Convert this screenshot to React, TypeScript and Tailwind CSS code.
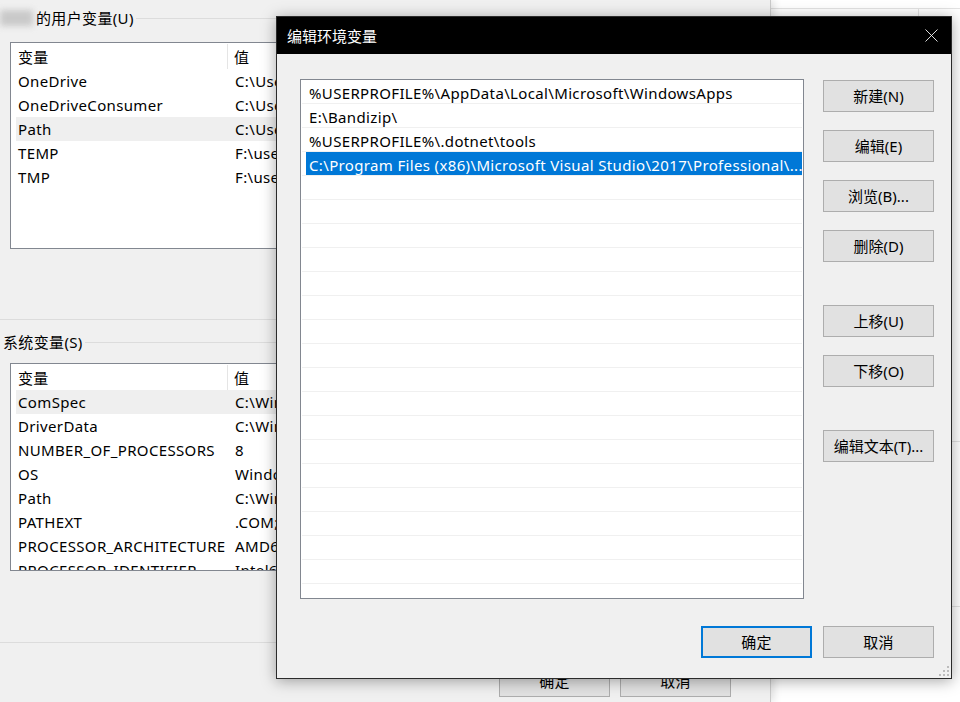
import { X } from 'lucide-react';

const font = { fontFamily: '"Noto Sans", "Noto Sans CJK SC", sans-serif' };

const userVars = [
  ['OneDrive', 'C:\\Users\\OneDrive'],
  ['OneDriveConsumer', 'C:\\Users\\OneDrive'],
  ['Path', 'C:\\Users\\AppData'],
  ['TEMP', 'F:\\users\\temp'],
  ['TMP', 'F:\\users\\temp'],
];

const sysVars = [
  ['ComSpec', 'C:\\Windows\\system32\\cmd.exe'],
  ['DriverData', 'C:\\Windows\\System32\\Drivers'],
  ['NUMBER_OF_PROCESSORS', '8'],
  ['OS', 'Windows_NT'],
  ['Path', 'C:\\Windows\\system32'],
  ['PATHEXT', '.COM;.EXE;.BAT'],
  ['PROCESSOR_ARCHITECTURE', 'AMD64'],
  ['PROCESSOR_IDENTIFIER', 'Intel64 Family 6'],
];

const paths = [
  '%USERPROFILE%\\AppData\\Local\\Microsoft\\WindowsApps',
  'E:\\Bandizip\\',
  '%USERPROFILE%\\.dotnet\\tools',
  'C:\\Program Files (x86)\\Microsoft Visual Studio\\2017\\Professional\\...',
];

function VarList({ rows, hot, height }: { rows: string[][]; hot: number; height: string }) {
  return (
    <div className={`ml-[10px] w-[740px] ${height} overflow-hidden border border-[#828790] bg-white`}>
      <div className="flex h-[26px] items-center">
        <div className="flex h-[25px] w-[217px] items-center border-r border-[#e5e5e5] pl-[7px] pt-px">变量</div>
        <div className="pl-[6px] pt-px">值</div>
      </div>
      {rows.map(([k, v], i) => (
        <div key={k + i} className={`ml-[5px] flex h-6 items-center ${i === hot ? 'bg-[#efefef]' : ''}`}>
          <div className="w-[212px] pl-[2px] whitespace-nowrap">{k}</div>
          <div className="pl-[7px] whitespace-nowrap">{v}</div>
        </div>
      ))}
    </div>
  );
}

function WinButton({ label, className = '' }: { label: string; className?: string }) {
  return (
    <button className={`flex h-8 w-[111px] items-center justify-center border border-[#adadad] bg-[#e1e1e1] ${className}`}>
      {label}
    </button>
  );
}

export default function App() {
  return (
    <div className="relative flex h-[702px] w-[960px] overflow-hidden bg-white text-[15px] leading-5 tracking-[0.35px] text-black" style={font}>
      {/* back window */}
      <div className="relative z-10 flex h-full w-[771px] flex-col border-r border-[#c9c9c9] bg-[#f0f0f0] shadow-[3px_0_8px_rgba(0,0,0,0.12)]">
        <div className="mt-2 flex h-5 items-center">
          <div className="h-[16px] w-[33px] bg-[#c9c9c9] blur-[3px]" />
          <span className="ml-[3px]">的用户变量(U)</span>
          <div className="ml-[2px] h-px flex-1 bg-[#dcdcdc]" />
        </div>
        <div className="mt-[14px]">
          <VarList rows={userVars} hot={2} height="h-[207px]" />
        </div>
        <div className="mt-[70px] h-px bg-[#dcdcdc]" />
        <div className="mt-[12px] flex h-5 items-center">
          <span className="pl-[3px]">系统变量(S)</span>
          <div className="ml-[2px] h-px flex-1 bg-[#dcdcdc]" />
        </div>
        <div className="mt-[11px]">
          <VarList rows={sysVars} hot={0} height="h-[208px]" />
        </div>
        <div className="mt-[71px] h-px bg-[#dcdcdc]" />
        <div className="ml-[499px] mt-[22px] flex gap-[10px]">
          <WinButton label="确定" className="w-[110px]" />
          <WinButton label="取消" />
        </div>
      </div>

      {/* window behind, right side */}
      <div className="flex flex-1 flex-col bg-white">
        <div className="h-[9px] border-b border-[#e3e3e3]" />
        <div className="flex h-[433px] border-b border-[#e3e3e3]">
          <div className="w-[148px] border-r border-[#e3e3e3]" />
        </div>
        <div className="h-[165px] border-b border-[#e3e3e3]" />
      </div>

      {/* edit dialog */}
      <div className="absolute left-[276px] top-[16px] z-20 flex h-[663px] w-[676px] flex-col border border-[#2b2b2b] bg-[#f0f0f0] shadow-[0_2px_14px_rgba(0,0,0,0.35)]">
        <div className="flex h-[37px] items-center bg-black text-white">
          <span className="pl-[10px] tracking-normal">编辑环境变量</span>
          <div className="ml-auto flex h-full w-[40px] items-center justify-center">
            <X size={23} strokeWidth={0.9} />
          </div>
        </div>
        <div className="flex pl-[23px] pt-[25px]">
          <div className="h-[520px] w-[504px] overflow-hidden border border-[#828790] bg-white">
            {Array.from({ length: 22 }).map((_, i) => (
              <div key={i} className="mx-px flex h-6 border-b border-[#f0f0f0]">
                {i === 3 ? (
                  <div className="ml-[4px] flex h-[23px] flex-1 items-center overflow-hidden bg-[#0078d7] pl-[3px] pt-[3px] text-white whitespace-nowrap">
                    {paths[i]}
                  </div>
                ) : (
                  <div className="flex h-[23px] items-center pl-[7px] pt-[3px] whitespace-nowrap">{paths[i] ?? ''}</div>
                )}
              </div>
            ))}
          </div>
          <div className="ml-[19px] mt-px flex flex-col gap-[18px] tracking-normal">
            <WinButton label="新建(N)" />
            <WinButton label="编辑(E)" />
            <WinButton label="浏览(B)..." />
            <WinButton label="删除(D)" />
            <WinButton label="上移(U)" className="mt-[25px]" />
            <WinButton label="下移(O)" />
            <WinButton label="编辑文本(T)..." className="mt-[25px]" />
          </div>
        </div>
        <div className="mt-[27px] flex justify-end gap-[11px] pr-[17px]">
          <button className="flex h-8 w-[111px] items-center justify-center border-2 border-[#0078d7] bg-[#e1e1e1]">确定</button>
          <WinButton label="取消" />
        </div>
        <svg className="absolute bottom-[2px] right-[2px]" width="11" height="11" viewBox="0 0 11 11">
          <g fill="#bcbcbc">
            <rect x="9" y="1" width="2" height="2" />
            <rect x="5" y="5" width="2" height="2" />
            <rect x="9" y="5" width="2" height="2" />
            <rect x="1" y="9" width="2" height="2" />
            <rect x="5" y="9" width="2" height="2" />
            <rect x="9" y="9" width="2" height="2" />
          </g>
        </svg>
      </div>
    </div>
  );
}
